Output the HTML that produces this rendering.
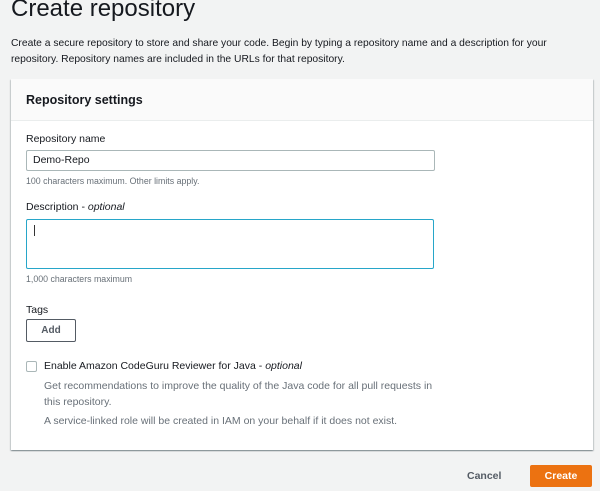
<!DOCTYPE html>
<html><head><style>
body{margin:0;width:600px;height:491px;background:#f2f3f3;font-family:"Liberation Sans",sans-serif;color:#16191f;position:relative;overflow:hidden}
div,span{position:absolute}
.t{font-size:10.5px;white-space:nowrap}
.s{font-size:8.8px;color:#687078;white-space:nowrap}
</style></head><body>
<div style="left:11px;top:-5px;font-size:24px;color:#16191f">Create repository</div>
<div class="t" style="left:11px;top:36px;line-height:16px;font-size:10.3px">Create a secure repository to store and share your code. Begin by typing a repository name and a description for your<br>repository. Repository names are included in the URLs for that repository.</div>
<div style="left:11px;top:79px;width:582px;height:371px;background:#fff;box-shadow:0 1px 1px 0 rgba(0,28,36,.3),1px 1px 1px 0 rgba(0,28,36,.15),-1px 1px 1px 0 rgba(0,28,36,.15)">
 <div style="left:0;top:0;width:582px;height:41px;background:#fafafa;border-bottom:1px solid #eaeded"></div>
 <div style="left:15px;top:14px;font-size:12.5px;font-weight:bold">Repository settings</div>
 <div class="t" style="left:15px;top:54px">Repository name</div>
 <div style="left:15px;top:71px;width:407px;height:19px;border:1px solid #aab7b8;border-radius:2px"></div>
 <div class="t" style="left:22px;top:75px">Demo-Repo</div>
 <div class="s" style="left:15px;top:97px">100 characters maximum. Other limits apply.</div>
 <div class="t" style="left:15px;top:122px">Description - <i>optional</i></div>
 <div style="left:15px;top:140px;width:406px;height:48px;border:1.5px solid #27a6c9;border-radius:2px"></div>
 <div style="left:23px;top:146px;width:1px;height:11px;background:#333"></div>
 <div class="s" style="left:15px;top:195px">1,000 characters maximum</div>
 <div class="t" style="left:15px;top:225px">Tags</div>
 <div style="left:15px;top:240px;width:48px;height:21px;border:1px solid #545b64;border-radius:2px;font-size:10px;font-weight:bold;text-align:center;line-height:21px;color:#545b64">Add</div>
 <div style="left:15px;top:282px;width:9px;height:9px;border:1px solid #aab7b8;border-radius:2px"></div>
 <div class="t" style="left:33px;top:281px">Enable Amazon CodeGuru Reviewer for Java - <i>optional</i></div>
 <div class="t" style="left:33px;top:299px;color:#687078;line-height:16px">Get recommendations to improve the quality of the Java code for all pull requests in<br>this repository.</div>
 <div class="t" style="left:33px;top:336px;color:#687078">A service-linked role will be created in IAM on your behalf if it does not exist.</div>
</div>
<div style="left:467px;top:470px;font-size:10.5px;font-weight:bold;color:#545b64">Cancel</div>
<div style="left:530px;top:465px;width:62px;height:22px;background:#ec7211;border-radius:2px;color:#fff;font-size:10.5px;font-weight:bold;text-align:center;line-height:22px">Create</div>
</body></html>
